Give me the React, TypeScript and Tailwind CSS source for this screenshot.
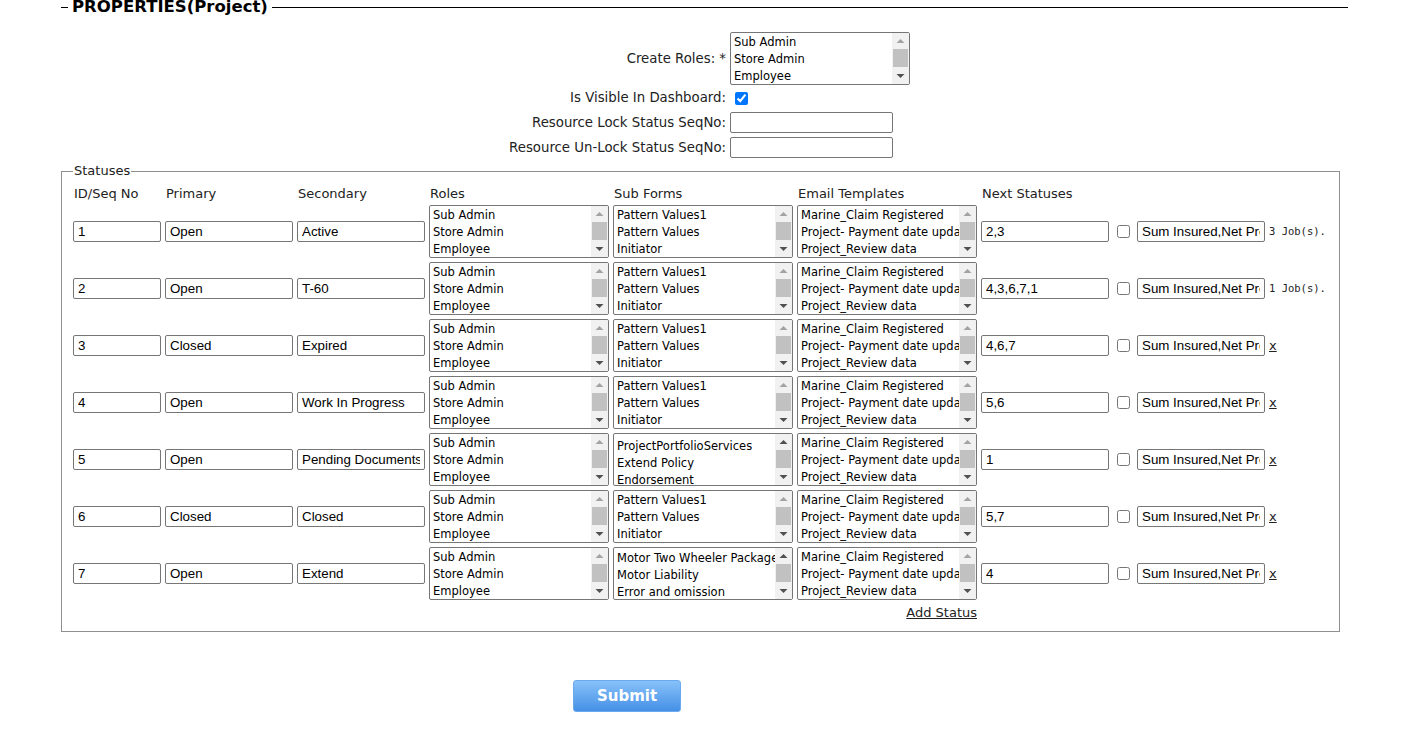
import React from "react";

const verdana = { fontFamily: '"DejaVu Sans", Verdana, sans-serif' };

type Row = {
  id: string;
  primary: string;
  secondary: string;
  forms: string[];
  formsOffset: number;
  formsUp: boolean;
  next: string;
  tail: string;
};

const formsA = ["Pattern Values1", "Pattern Values", "Initiator"];

const rows: Row[] = [
  { id: "1", primary: "Open", secondary: "Active", forms: formsA, formsOffset: 0, formsUp: false, next: "2,3", tail: "3 Job(s)." },
  { id: "2", primary: "Open", secondary: "T-60", forms: formsA, formsOffset: 0, formsUp: false, next: "4,3,6,7,1", tail: "1 Job(s)." },
  { id: "3", primary: "Closed", secondary: "Expired", forms: formsA, formsOffset: 0, formsUp: false, next: "4,6,7", tail: "x" },
  { id: "4", primary: "Open", secondary: "Work In Progress", forms: formsA, formsOffset: 0, formsUp: false, next: "5,6", tail: "x" },
  { id: "5", primary: "Open", secondary: "Pending Documents", forms: ["ProjectPortfolioServices", "Extend Policy", "Endorsement"], formsOffset: 3, formsUp: true, next: "1", tail: "x" },
  { id: "6", primary: "Closed", secondary: "Closed", forms: formsA, formsOffset: 0, formsUp: false, next: "5,7", tail: "x" },
  { id: "7", primary: "Open", secondary: "Extend", forms: ["Motor Two Wheeler Package", "Motor Liability", "Error and omission"], formsOffset: 1, formsUp: true, next: "4", tail: "x" },
];

const roles = ["Sub Admin", "Store Admin", "Employee"];
const emails = ["Marine_Claim Registered", "Project- Payment date updated", "Project_Review data"];

function Arrow(props: { up?: boolean; dark?: boolean }) {
  return (
    <svg width="9" height="6" viewBox="0 0 9 6">
      <path d={props.up ? "M0.5 5 L4.5 1 L8.5 5 Z" : "M0.5 1 L4.5 5 L8.5 1 Z"} fill={props.dark ? "#505050" : "#a3a3a3"} />
    </svg>
  );
}

function ListBox(props: { items: string[]; offset?: number; upDark?: boolean }) {
  return (
    <div className="flex h-[53px] w-[180px] shrink-0 overflow-hidden rounded-[2px] border border-[#767676] bg-white">
      <div className="min-w-0 flex-1 overflow-hidden pl-[3px] pt-[1px]" style={verdana}>
        <div style={{ marginTop: props.offset ?? 0 }}>
          {props.items.map((t) => (
            <div key={t} className="whitespace-nowrap text-[11.5px] leading-[17px] text-black">
              {t}
            </div>
          ))}
        </div>
      </div>
      <div className="flex w-[17px] shrink-0 flex-col items-center bg-[#f1f1f1]">
        <div className="flex h-[16px] items-center justify-center">
          <Arrow up dark={props.upDark} />
        </div>
        <div className="h-[18px] w-[15px] bg-[#c1c1c1]" />
        <div className="flex flex-1 items-center justify-center">
          <Arrow dark />
        </div>
      </div>
    </div>
  );
}

function TextBox(props: { value: string; w: string }) {
  return (
    <input
      readOnly
      value={props.value}
      className={`${props.w} h-[21px] shrink-0 rounded-[2px] border border-[#767676] bg-white px-[4px] text-[13.33px] text-black outline-none`}
      style={{ fontFamily: '"Liberation Sans", Arial, sans-serif' }}
    />
  );
}

export default function App() {
  return (
    <div className="min-h-[731px] w-[1406px] bg-white text-[#222]" style={verdana}>
      <fieldset className="ml-[61px] w-[1287px] border-t border-black pl-[7px]">
        <legend className="px-[4px] text-[16.5px] font-bold leading-[14px] text-black">PROPERTIES(Project)</legend>

        <div className="mt-[18px] flex items-center">
          <div className="w-[662px] pr-[4px] text-right text-[13.3px]">Create Roles: *</div>
          <ListBox items={roles} />
        </div>
        <div className="flex h-[26px] items-center">
          <div className="w-[662px] pr-[4px] text-right text-[13.3px]">Is Visible In Dashboard:</div>
          <input type="checkbox" defaultChecked className="ml-[5px] h-[13px] w-[13px]" />
        </div>
        <div className="mt-[1px] flex items-center">
          <div className="w-[662px] pr-[4px] text-right text-[13.3px]">Resource Lock Status SeqNo:</div>
          <TextBox value="" w="w-[163px]" />
        </div>
        <div className="mt-[4px] flex items-center">
          <div className="w-[662px] pr-[4px] text-right text-[13.3px]">Resource Un-Lock Status SeqNo:</div>
          <TextBox value="" w="w-[163px]" />
        </div>
      </fieldset>

      <fieldset className="ml-[61px] mt-[5px] w-[1279px] border border-[#8f8f8f] pb-[10px] pl-[11px]">
        <legend className="px-[1px] text-[13px] leading-[16px]">Statuses</legend>
        <div className="flex gap-[4px] pt-[7px] text-[13px] leading-[16px]">
          <div className="w-[88px] pl-[1px]">ID/Seq No</div>
          <div className="w-[128px] pl-[1px]">Primary</div>
          <div className="w-[128px] pl-[1px]">Secondary</div>
          <div className="w-[180px] pl-[1px]">Roles</div>
          <div className="w-[180px] pl-[1px]">Sub Forms</div>
          <div className="w-[180px] pl-[1px]">Email Templates</div>
          <div className="w-[128px] pl-[1px]">Next Statuses</div>
        </div>
        <div className="mt-[3px] flex flex-col gap-[4px]">
          {rows.map((r) => (
            <div key={r.id} className="flex items-center gap-[4px]">
              <TextBox value={r.id} w="w-[88px]" />
              <TextBox value={r.primary} w="w-[128px]" />
              <TextBox value={r.secondary} w="w-[128px]" />
              <ListBox items={roles} />
              <ListBox items={r.forms} offset={r.formsOffset} upDark={r.formsUp} />
              <ListBox items={emails} />
              <TextBox value={r.next} w="w-[128px]" />
              <input type="checkbox" className="ml-[4px] mr-[3px] h-[13px] w-[13px]" />
              <TextBox value="Sum Insured,Net Premium" w="w-[128px]" />
              {r.tail === "x" ? (
                <a href="#" className="text-[13px] text-[#222] underline">
                  x
                </a>
              ) : (
                <span className="text-[10.5px] text-[#222]" style={{ fontFamily: '"DejaVu Sans Mono", monospace' }}>
                  {r.tail}
                </span>
              )}
            </div>
          ))}
        </div>
        <div className="flex w-[904px] justify-end pt-[4px]">
          <a href="#" className="text-[13px] leading-[17px] text-[#222] underline">
            Add Status
          </a>
        </div>
      </fieldset>

      <button className="ml-[573px] mt-[48px] h-[32px] w-[108px] rounded-[3px] border border-[#6aa9ee] bg-gradient-to-b from-[#86c1f9] to-[#4590e6] text-[15px] font-bold text-white">
        Submit
      </button>
    </div>
  );
}
